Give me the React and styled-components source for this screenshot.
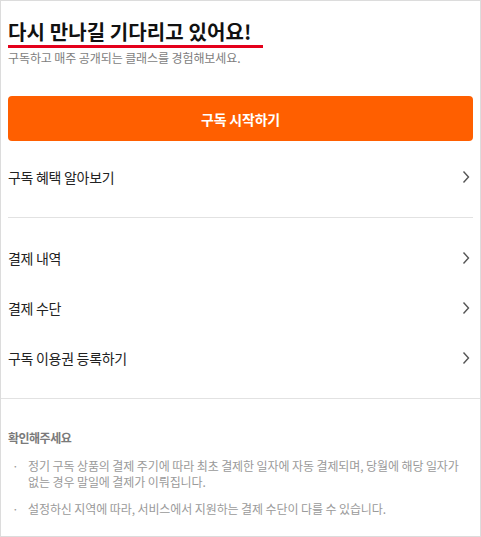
import React from "react";
import styled, { createGlobalStyle } from "styled-components";

const Global = createGlobalStyle`
  html, body { margin: 0; padding: 0; background: #fff; }
  body { font-family: "Noto Sans CJK KR", "Noto Sans", sans-serif; }
  * { box-sizing: border-box; }
`;

const Frame = styled.div`
  width: 481px;
  height: 537px;
  border: 1px solid #dcdcdc;
  background: #fff;
  display: flex;
  flex-direction: column;
  overflow: hidden;
`;

const Top = styled.section`
  padding: 0 7px;
  display: flex;
  flex-direction: column;
`;

const Header = styled.header`
  padding-top: 18px;
  display: flex;
  flex-direction: column;
  align-items: flex-start;
`;

const Title = styled.h1`
  margin: 0;
  font-size: 20px;
  font-weight: 700;
  color: #111;
  line-height: 26px;
  letter-spacing: 0.1px;
  padding-right: 12px;
  border-bottom: 3px solid #e4001b;
`;

const Sub = styled.p`
  margin: 2px 0 0;
  font-size: 12px;
  color: #7d7d7d;
  line-height: 16px;
  letter-spacing: -0.1px;
`;

const StartButton = styled.button`
  margin-top: 30px;
  height: 45px;
  width: 100%;
  border: 0;
  border-radius: 4px;
  background: #ff5f00;
  color: #fff;
  font-family: inherit;
  font-size: 14px;
  font-weight: 700;
  letter-spacing: -0.2px;
  cursor: pointer;
`;

const Row = styled.a`
  height: 50px;
  display: flex;
  align-items: center;
  justify-content: space-between;
  font-size: 14px;
  color: #222;
  text-decoration: none;
  letter-spacing: -0.3px;
  padding-right: 3px;
`;

const Group = styled.div`
  display: flex;
  flex-direction: column;
  padding: ${(p) => p.$pad};
`;

const Divider = styled.hr`
  margin: 0;
  border: 0;
  border-top: 1px solid #e2e2e2;
`;

const FullDivider = styled.hr`
  margin: 0;
  border: 0;
  border-top: 1px solid #e2e2e2;
`;

const Notice = styled.section`
  padding: 31px 7px 0;
`;

const NoticeTitle = styled.h2`
  margin: 0;
  font-size: 12px;
  font-weight: 700;
  color: #7a7a7a;
  line-height: 16px;
  letter-spacing: -0.5px;
`;

const List = styled.ul`
  margin: 12px 0 0;
  padding: 0;
  list-style: none;
  display: flex;
  flex-direction: column;
  gap: 11px;
`;

const Item = styled.li`
  position: relative;
  padding-left: 20px;
  padding-right: 6px;
  font-size: 12px;
  line-height: 16px;
  color: #9a9a9a;
  letter-spacing: -0.1px;
  &::before {
    content: "·";
    position: absolute;
    left: 4px;
    top: 0;
    color: #999;
  }
`;

const Chevron = () => (
  <svg width="8" height="14" viewBox="0 0 8 14" fill="none">
    <path d="M1.5 1.5 L6.5 7 L1.5 12.5" stroke="#555" strokeWidth="1.4" />
  </svg>
);

export default function App() {
  return (
    <>
      <Global />
      <Frame>
        <Top>
          <Header>
            <Title>다시 만나길 기다리고 있어요!</Title>
            <Sub>구독하고 매주 공개되는 클래스를 경험해보세요.</Sub>
          </Header>
          <StartButton>구독 시작하기</StartButton>
          <Group $pad="11px 0 15px">
            <Row href="#">
              구독 혜택 알아보기
              <Chevron />
            </Row>
          </Group>
          <Divider />
          <Group $pad="15px 0 15px">
            <Row href="#">
              결제 내역
              <Chevron />
            </Row>
            <Row href="#">
              결제 수단
              <Chevron />
            </Row>
            <Row href="#">
              구독 이용권 등록하기
              <Chevron />
            </Row>
          </Group>
        </Top>
        <FullDivider />
        <Notice>
          <NoticeTitle>확인해주세요</NoticeTitle>
          <List>
            <Item>
              정기 구독 상품의 결제 주기에 따라 최초 결제한 일자에 자동 결제되며, 당월에 해당 일자가 없는 경우 말일에 결제가 이뤄집니다.
            </Item>
            <Item>설정하신 지역에 따라, 서비스에서 지원하는 결제 수단이 다를 수 있습니다.</Item>
          </List>
        </Notice>
      </Frame>
    </>
  );
}
